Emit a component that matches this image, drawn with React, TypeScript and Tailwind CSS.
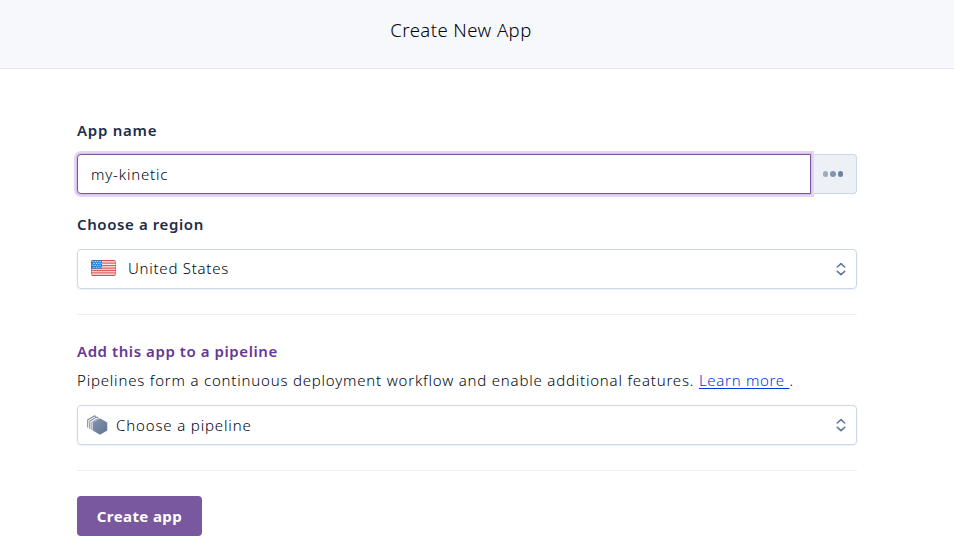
import React from 'react';

function Chevrons() {
  return (
    <svg width="10" height="14" viewBox="0 0 10 14" fill="none" stroke="#62779c" strokeWidth="1.6" strokeLinecap="round" strokeLinejoin="round">
      <path d="M1.3 5 5 1.6 8.7 5M1.3 9.3 5 12.7l3.7-3.4" />
    </svg>
  );
}

function Flag() {
  return (
    <svg width="25" height="16" viewBox="0 0 25 16">
      <defs>
        <clipPath id="flag"><rect width="25" height="16" rx="2" /></clipPath>
      </defs>
      <g clipPath="url(#flag)">
        <rect width="25" height="16" fill="#fdeeee" />
        <path d="M0 .6h25M0 3.1h25M0 5.6h25M0 8.1h25M0 10.5h25M0 12.9h25M0 15.4h25" stroke="#e45c57" strokeWidth="1.3" />
        <rect width="11" height="8.7" fill="#1b84dc" />
        <path d="M1.3 1.5h9M2.5 3.4h8M1.3 5.3h9M2.5 7.2h8" stroke="#d5ebff" strokeWidth="1.1" strokeDasharray="1.1 1.3" />
      </g>
      <rect x=".5" y=".5" width="24" height="15" rx="1.7" fill="none" stroke="#b5464a" strokeOpacity=".4" />
    </svg>
  );
}

function PipelineIcon() {
  return (
    <svg width="21" height="20" viewBox="0 0 21 20" fill="none">
      <defs>
        <linearGradient id="hex" x1="0" y1="0" x2="1" y2="1">
          <stop stopColor="#8290aa" />
          <stop offset="1" stopColor="#64779a" />
        </linearGradient>
      </defs>
      <path d="M.7 12.5V4.7L7.5.9l1.4.6M2.8 14V6.1l6.9-4 1.5.7" stroke="#7d8aa3" strokeWidth="1.1" />
      <path d="M4.8 15V7.3l6.7-3.9" stroke="#7d8aa3" strokeWidth=".9" />
      <path d="M13 4.1 19.5 7.8v7.4L13 18.9l-6.5-3.7V7.8Z" fill="url(#hex)" stroke="url(#hex)" strokeWidth="1.5" strokeLinejoin="round" />
    </svg>
  );
}

export default function App() {
  return (
    <div className="h-[560px] w-[954px] overflow-hidden bg-white font-['Noto_Sans',sans-serif] text-[15px] font-light text-[#000613]">
      <header className="flex h-[69px] justify-center border-b border-[#e3e7f1] bg-[#f7f8fc] pt-[16px] pr-[32px]">
        <h1 className="text-[18.5px] leading-[28px] font-light whitespace-nowrap text-[#000206]"><span className="tracking-[0.45px]">Create New App</span></h1>
      </header>
      <main className="ml-[77px] w-[780px] pt-[50px]">
        <label className="block h-[35px] leading-[22px] font-semibold text-[#1d2d49]"><span className="tracking-[0.75px]">App name</span></label>
        <div className="flex h-10">
          <div className="z-10 flex w-[734px] items-center rounded-l-[4px] border border-[#79589f] bg-white pl-[13px] shadow-[0_0_0_1px_#d6c0e9,0_0_0_3px_#e5d5f3]">
            <span className="tracking-[0.8px]">my-kinetic</span>
          </div>
          <div className="flex w-[46px] items-center justify-center gap-[2px] rounded-r-[4px] border border-l-0 border-[#cdd7e8] bg-[#edf1f6] pr-px">
            <i className="size-[5.5px] rounded-full bg-[#9fabc0]" />
            <i className="size-[5.5px] rounded-full bg-[#8493ad]" />
            <i className="size-[5.5px] rounded-full bg-[#71829f]" />
          </div>
        </div>
        <label className="mt-[19px] block h-[36px] leading-[22px] font-semibold text-[#1d2d49]"><span className="tracking-[0.6px]">Choose a region</span></label>
        <div className="flex h-10 items-center rounded-[4px] border border-[#cbd6e8] pr-[10px] pl-[13px] shadow-[0_1px_2px_#edf0f5]">
          <div className="-mt-[2px]"><Flag /></div>
          <span className="-mt-[2px] ml-[12px] tracking-[0.75px]">United States</span>
          <div className="ml-auto"><Chevrons /></div>
        </div>
        <hr className="mt-[25px] border-[#eeeff5]" />
        <h2 className="mt-[25px] leading-[22px] font-semibold text-[#653796]"><span className="tracking-[0.57px]">Add this app to a pipeline</span></h2>
        <p className="mt-[7px] leading-[22px] whitespace-nowrap"><span className="tracking-[0.8px]">Pipelines form a continuous deployment workflow and enable additional features. </span><a className="tracking-[0.7px] whitespace-pre text-[#0037e5] underline underline-offset-2">Learn more </a>.</p>
        <div className="mt-[14px] flex h-10 items-center rounded-[4px] border border-[#cbd6e8] pr-[10px] pl-[9px] shadow-[0_1px_2px_#edf0f5]">
          <div className="-mt-[1px]"><PipelineIcon /></div>
          <span className="ml-[8px] tracking-[0.85px]">Choose a pipeline</span>
          <div className="ml-auto"><Chevrons /></div>
        </div>
        <hr className="mt-[25px] border-[#eeeff3]" />
        <button className="mt-[25px] h-10 w-[125px] rounded-[4px] bg-[#79589f] font-bold text-white"><span className="tracking-[0.4px]">Create app</span></button>
      </main>
    </div>
  );
}
